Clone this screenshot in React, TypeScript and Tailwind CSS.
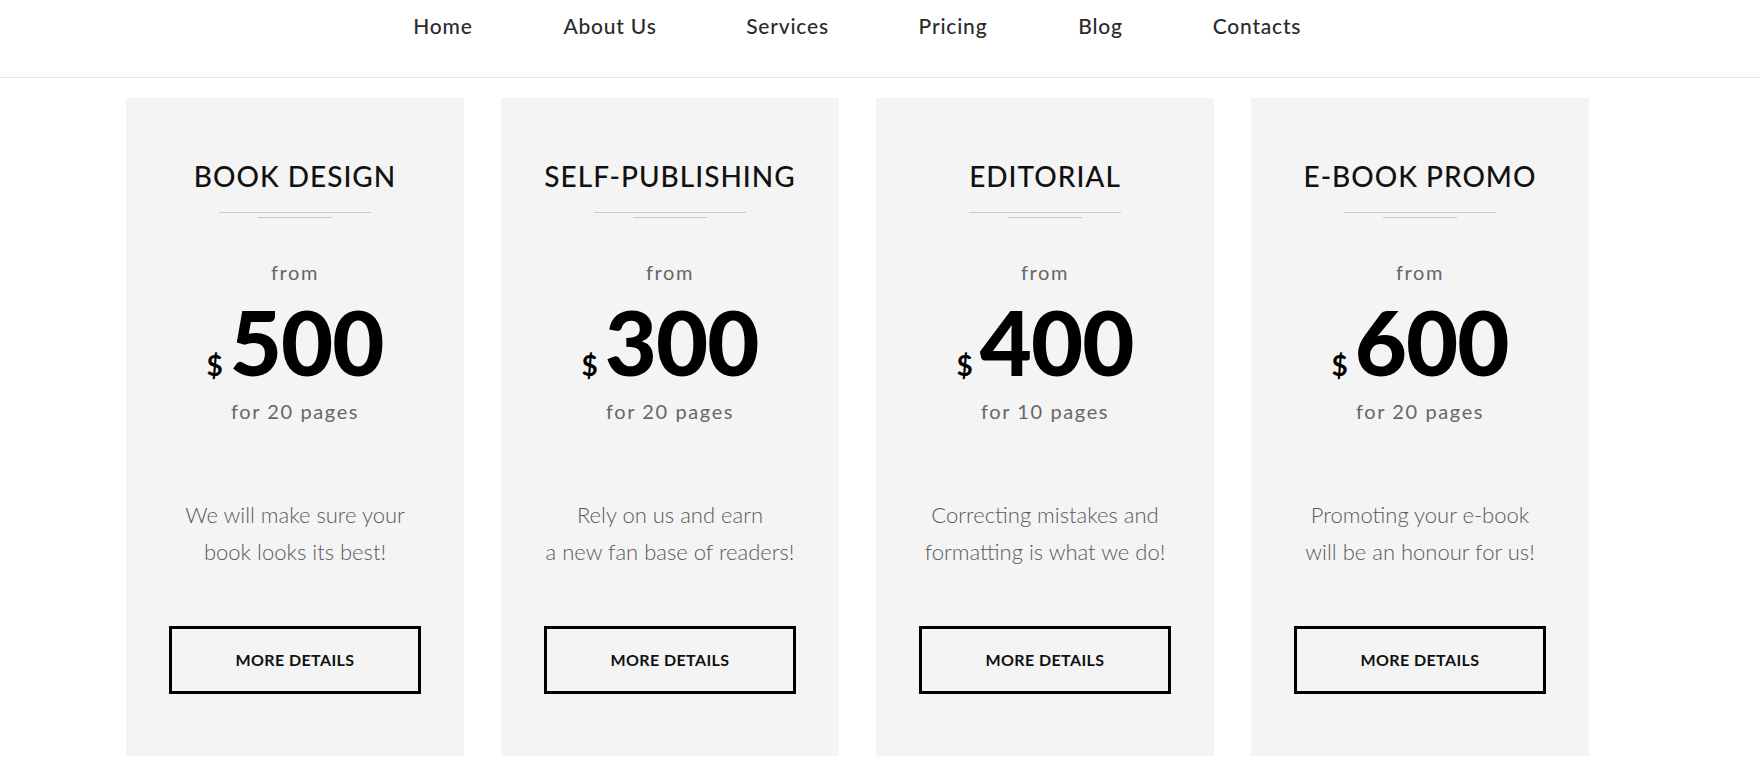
import React from "react";

const NAV = [
  { label: "Home", w: "w-[150px]" },
  { label: "About Us", w: "w-[184px]" },
  { label: "Services", w: "w-[171px]" },
  { label: "Pricing", w: "w-[160px]" },
  { label: "Blog", w: "w-[135px]" },
  { label: "Contacts", w: "w-[178px]" },
];

const PLANS = [
  {
    title: "BOOK DESIGN",
    price: "500",
    pages: "for 20 pages",
    text: ["We will make sure your", "book looks its best!"],
  },
  {
    title: "SELF-PUBLISHING",
    price: "300",
    pages: "for 20 pages",
    text: ["Rely on us and earn", "a new fan base of readers!"],
  },
  {
    title: "EDITORIAL",
    price: "400",
    pages: "for 10 pages",
    text: ["Correcting mistakes and", "formatting is what we do!"],
  },
  {
    title: "E-BOOK PROMO",
    price: "600",
    pages: "for 20 pages",
    text: ["Promoting your e-book", "will be an honour for us!"],
  },
];

function PriceCard({ plan }: { plan: (typeof PLANS)[number] }) {
  return (
    <div className="w-[338px] bg-[#f4f4f4] flex flex-col items-center pt-[61px] pb-[62px]">
      <h3 className="text-[28px] leading-[34px] font-medium tracking-[1px] text-[#111]">
        {plan.title}
      </h3>

      {/* double divider */}
      <div className="mt-[19px] w-[152px] h-px bg-[#cacaca]" />
      <div className="mt-[4px] w-[74px] h-px bg-[#cacaca]" />

      <p className="mt-[42px] text-[20px] leading-[24px] tracking-[1.6px] text-[#666]">
        from
      </p>

      <div className="mt-[12px] flex items-baseline h-[90px] text-black">
        <span className="text-[28px] font-bold mr-[7px] leading-none">$</span>
        <span className="text-[90px] leading-[90px] font-black tracking-[-1px]">
          {plan.price}
        </span>
      </div>

      <p className="mt-[13px] text-[20px] leading-[24px] tracking-[1.6px] text-[#666]">
        {plan.pages}
      </p>

      <p className="mt-[73px] text-[22px] leading-[37px] font-light text-[#5a5a5a] text-center">
        {plan.text[0]}
        <br />
        {plan.text[1]}
      </p>

      <button className="mt-[56px] w-[252px] h-[68px] border-[3px] border-black text-[16px] font-bold tracking-[0.4px] text-[#111]">
        MORE DETAILS
      </button>
    </div>
  );
}

export default function App() {
  return (
    <div className="min-h-screen bg-white font-['Lato',sans-serif]">
      {/* Header */}
      <header className="h-[78px] border-b border-[#e6e6e6]">
        <nav className="flex pl-[368px] pt-[12px]">
          {NAV.map((item) => (
            <a
              key={item.label}
              href="#"
              className={`${item.w} text-center text-[21px] leading-[28px] font-medium tracking-[0.8px] text-[#2b2b2b]`}
            >
              {item.label}
            </a>
          ))}
        </nav>
      </header>

      {/* Pricing cards */}
      <main className="flex gap-[37px] pl-[126px] pt-[20px]">
        {PLANS.map((plan) => (
          <PriceCard key={plan.title} plan={plan} />
        ))}
      </main>
    </div>
  );
}
